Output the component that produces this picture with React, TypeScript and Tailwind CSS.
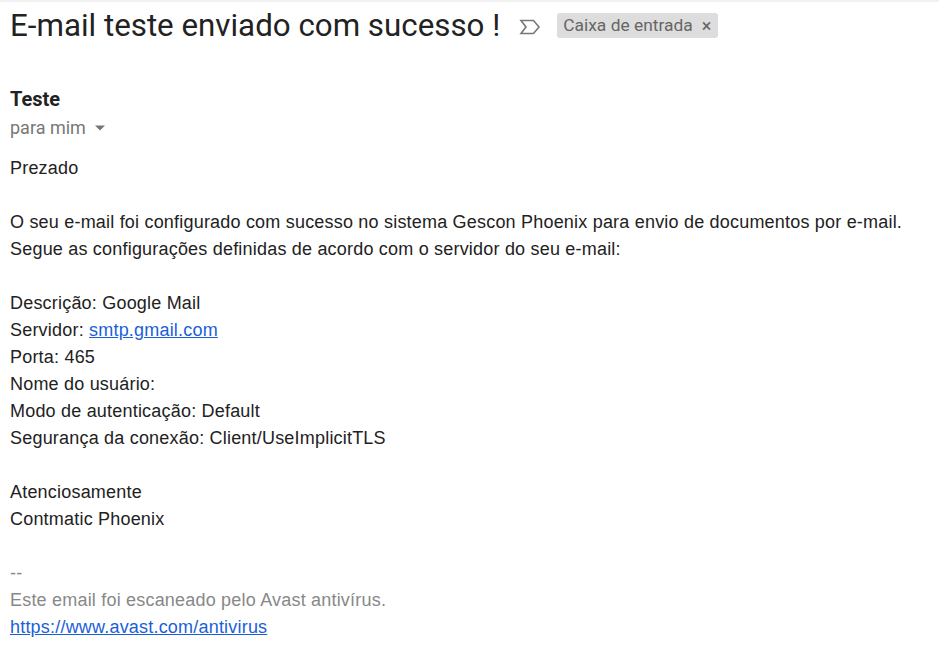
import React from "react";

const body = "font-['Liberation_Sans',Arial,sans-serif]";

export default function App() {
  return (
    <div className="w-[939px] h-[672px] bg-white overflow-hidden">
      <div className="h-[2px] bg-[#f1f1f1]" />
      <div className="flex items-center pl-[10px] h-[47px]">
        <h1 className="font-['Roboto',sans-serif] text-[31.3px] leading-none text-[#222]">
          E-mail teste enviado com sucesso !
        </h1>
        <svg width="22" height="18" viewBox="0 0 22 18" className="ml-[19px] mt-[2px]" fill="none">
          <path d="M2 2.5 H14.5 L20 9 L14.5 15.5 H2 L7 9 Z" stroke="#777" strokeWidth="1.6" strokeLinejoin="miter" />
        </svg>
        <span className="ml-[16px] flex items-center h-[25px] pl-[6px] pr-[7px] rounded-[3px] bg-[#dddddd] text-[#666] font-['Roboto',sans-serif] text-[17.4px] leading-none">
          Caixa de entrada
          <span className="ml-[9px] text-[18px]">×</span>
        </span>
      </div>
      <div className="pl-[10px] mt-[37px] font-['Roboto',sans-serif]">
        <div className="text-[20px] font-bold text-[#222] leading-[26px]">Teste</div>
        <div className="flex items-center text-[18px] text-[#777] leading-[32px]">
          para mim
          <svg width="10" height="6" viewBox="0 0 10 5" className="ml-[9px]">
            <path d="M0 0 H10 L5 5 Z" fill="#777" />
          </svg>
        </div>
      </div>
      <div className={`${body} pl-[10px] text-[18px] tracking-[0.2px] leading-[27px] text-[#222] mt-[11px]`}>
        <div>Prezado</div>
        <div className="h-[27px]" />
        <div>O seu e-mail foi configurado com sucesso no sistema Gescon Phoenix para envio de documentos por e-mail.</div>
        <div>Segue as configurações definidas de acordo com o servidor do seu e-mail:</div>
        <div className="h-[27px]" />
        <div>Descrição: Google Mail</div>
        <div>
          Servidor: <a className="text-[#1a5fd8] underline" href="#">smtp.gmail.com</a>
        </div>
        <div>Porta: 465</div>
        <div>Nome do usuário:</div>
        <div>Modo de autenticação: Default</div>
        <div>Segurança da conexão: Client/UseImplicitTLS</div>
        <div className="h-[27px]" />
        <div>Atenciosamente</div>
        <div>Contmatic Phoenix</div>
        <div className="h-[27px]" />
        <div className="text-[#888]">--</div>
        <div className="text-[#888]">Este email foi escaneado pelo Avast antivírus.</div>
        <div>
          <a className="text-[#1a5fd8] underline" href="#">https://www.avast.com/antivirus</a>
        </div>
      </div>
    </div>
  );
}
